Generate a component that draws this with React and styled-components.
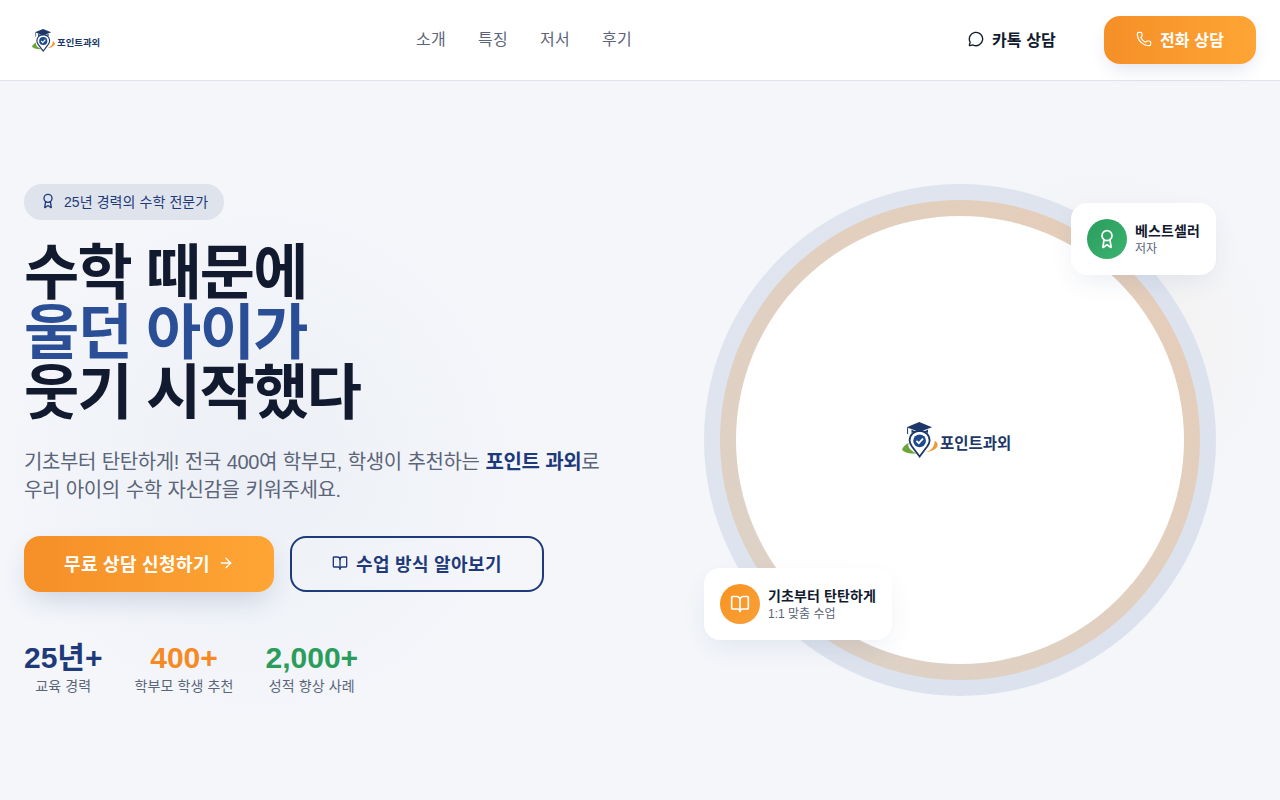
import React from 'react';
import styled, { createGlobalStyle } from 'styled-components';
import { Award, ArrowRight, BookOpen, MessageCircle, Phone } from 'lucide-react';

const NAVY = '#1e3a7a';
const INK = '#111a2e';
const MUTED = '#5b6579';
const ORANGE_GRADIENT = 'linear-gradient(90deg, #f58f27, #fea535)';

const Global = createGlobalStyle`
  * { box-sizing: border-box; }
  html, body { margin: 0; padding: 0; }
  body {
    background: #f4f6fa;
    font-family: "Liberation Sans", "Noto Sans CJK KR", sans-serif;
    color: ${INK};
  }
`;

const Page = styled.div`
  width: 100%;
  height: 800px;
  overflow: hidden;
  display: flex;
  flex-direction: column;
`;

const Header = styled.header`
  flex: 0 0 81px;
  display: flex;
  align-items: center;
  justify-content: space-between;
  padding: 0 24px;
  background: rgba(255, 255, 255, 0.95);
  border-bottom: 1px solid #e0e4ec;
`;

const LogoBox = styled.div`
  width: ${(p) => p.$width}px;
  display: flex;
  align-items: center;
  padding-left: ${(p) => p.$inset}px;
  gap: 2px;
`;

const LogoText = styled.span`
  font-size: ${(p) => p.$size}px;
  font-weight: 700;
  color: #1c3768;
  white-space: nowrap;
  line-height: 1;
  padding-top: ${(p) => p.$drop}px;
`;

const Nav = styled.nav`
  display: flex;
  gap: 32px;
`;

const NavLink = styled.a`
  font-size: 16px;
  line-height: 24px;
  letter-spacing: 0.28px;
  color: ${MUTED};
  margin-top: -1px;
`;

const Actions = styled.div`
  display: flex;
  align-items: center;
  gap: 16px;
`;

const BaseButton = styled.a`
  display: inline-flex;
  align-items: center;
  justify-content: center;
  gap: 8px;
  font-weight: 700;
  border-radius: 16px;
  white-space: nowrap;
`;

const GhostButton = styled(BaseButton)`
  height: 48px;
  padding: 0 32px 2px;
  font-size: 16px;
  letter-spacing: 0.14px;
  color: ${INK};
`;

const CallButton = styled(BaseButton)`
  height: 48px;
  padding: 0 32px 2px;
  font-size: 16px;
  letter-spacing: 0.14px;
  color: #fff;
  background: ${ORANGE_GRADIENT};
  box-shadow: 0 8px 20px -6px rgba(30, 58, 122, 0.18);
`;

const Hero = styled.main`
  flex: 1;
  display: grid;
  grid-template-columns: 1fr 1fr;
  gap: 48px;
  align-items: center;
  padding: 0 24px 1px;
  background:
    radial-gradient(circle at 260px 380px, rgba(30, 58, 122, 0.035), rgba(30, 58, 122, 0) 270px),
    radial-gradient(circle at 1100px 260px, rgba(247, 147, 30, 0.05), rgba(247, 147, 30, 0) 190px);
`;

const Copy = styled.section`
  display: flex;
  flex-direction: column;
  align-items: flex-start;
`;

const Pill = styled.div`
  height: 36px;
  display: inline-flex;
  align-items: center;
  gap: 8px;
  padding: 0 16px 2px;
  border-radius: 18px;
  background: rgba(30, 58, 122, 0.1);
  color: ${NAVY};
  font-size: 14px;
  letter-spacing: 0.08px;
`;

const Title = styled.h1`
  margin: 24px 0 0;
  font-size: 60px;
  line-height: 60px;
  font-weight: 700;
  letter-spacing: -1.65px;
  color: ${INK};
`;

const TitleLine = styled.span`
  display: block;
  color: ${(p) => p.$color || 'inherit'};
`;

const Lead = styled.p`
  margin: 24px 0 0;
  font-size: 20px;
  line-height: 28px;
  letter-spacing: -0.4px;
  word-spacing: 0.7px;
  color: ${MUTED};
`;

const LeadStrong = styled.strong`
  color: ${NAVY};
`;

const CtaRow = styled.div`
  display: flex;
  gap: 16px;
  margin-top: 32px;
`;

const PrimaryCta = styled(BaseButton)`
  height: 56px;
  padding: 0 40px 2px;
  font-size: 18px;
  letter-spacing: 0.44px;
  word-spacing: -0.44px;
  color: #fff;
  background: ${ORANGE_GRADIENT};
  box-shadow: 0 12px 28px -6px rgba(30, 58, 122, 0.2);
`;

const SecondaryCta = styled(BaseButton)`
  height: 56px;
  padding: 0 40px 2px;
  font-size: 18px;
  letter-spacing: 0.44px;
  word-spacing: -0.44px;
  color: ${NAVY};
  border: 2px solid ${NAVY};
`;

const Stats = styled.div`
  display: flex;
  gap: 32px;
  margin-top: 48px;
`;

const Stat = styled.div`
  display: flex;
  flex-direction: column;
  align-items: center;
`;

const StatValue = styled.div`
  font-size: 30px;
  line-height: 36px;
  font-weight: 700;
  color: ${(p) => p.$color};
`;

const StatLabel = styled.div`
  font-size: 14px;
  line-height: 20px;
  letter-spacing: 0.12px;
  color: ${MUTED};
`;

const Visual = styled.section`
  display: flex;
  justify-content: center;
`;

const Stage = styled.div`
  position: relative;
  width: 512px;
  height: 512px;
`;

const Ring = styled.div`
  width: 100%;
  height: 100%;
  padding: 16px;
  border-radius: 50%;
  background: ${(p) => p.$bg};
`;

const Disc = styled.div`
  width: 100%;
  height: 100%;
  border-radius: 50%;
  background: #fff;
  display: flex;
  align-items: center;
  justify-content: center;
`;

const FloatCard = styled.div`
  position: absolute;
  display: flex;
  align-items: center;
  gap: 8px;
  padding: 16px;
  border-radius: 16px;
  background: #fff;
  box-shadow: 0 10px 28px -6px rgba(30, 58, 122, 0.1);
  ${(p) => p.$pos}
`;

const CardIcon = styled.div`
  width: 40px;
  height: 40px;
  border-radius: 50%;
  display: flex;
  align-items: center;
  justify-content: center;
  color: #fff;
  background: ${(p) => p.$bg};
`;

const CardText = styled.div`
  display: flex;
  flex-direction: column;
`;

const CardTitle = styled.div`
  font-size: 14px;
  line-height: 20px;
  letter-spacing: 0.12px;
  font-weight: 700;
  color: ${INK};
`;

const CardSub = styled.div`
  font-size: 12px;
  line-height: 16px;
  color: ${MUTED};
`;

function LogoMark({ size }) {
  return (
    <svg width={size} height={size} viewBox="0 0 36 36" fill="none" aria-hidden="true">
      <path d="M0 27.5C1 24.5 3.5 22.5 6.5 21C5.5 24 7 27 11 29.5C12.5 30.5 14 31 15 31.5C9 32 2 31 0 27.5Z" fill="#6ea53a" />
      <path d="M24 30C29 28.5 32.5 25 32.5 19.5L33 19C35.5 20.5 36.5 22.5 35 25C33 28 28.5 29.8 24 30Z" fill="#ef9a37" />
      <path d="M17.6 34.5L10 24.5C8.2 22 7.6 20.5 7.6 18.5C7.6 13 12 8.8 17.6 8.8C23.2 8.8 27.6 13 27.6 18.5C27.6 20.5 27 22 25.2 24.5Z" fill="#fff" stroke="#1c3768" strokeWidth="1.8" />
      <circle cx="17.6" cy="18.8" r="6.4" fill="#1c4a8c" />
      <path d="M14.4 18.8L16.8 21.2L21 16.6" stroke="#fff" strokeWidth="1.8" fill="none" />
      <path d="M9.5 7.5C11.5 10 24 10 26 7.5V11C22 8.6 13.5 8.6 9.5 11Z" fill="#1c3768" />
      <path d="M17.3 0L30 5.2L17.3 10L4.7 5.2Z" fill="#1c3768" />
      <path d="M5.6 5.5V12" stroke="#1c3768" strokeWidth="1" />
    </svg>
  );
}

function Logo({ width, inset, mark, text, drop }) {
  return (
    <LogoBox $width={width} $inset={inset}>
      <LogoMark size={mark} />
      <LogoText $size={text} $drop={drop}>포인트과외</LogoText>
    </LogoBox>
  );
}

const NAV_ITEMS = ['소개', '특징', '저서', '후기'];
const STATS = [
  { value: '25년+', label: '교육 경력', color: NAVY },
  { value: '400+', label: '학부모 학생 추천', color: '#f58a25' },
  { value: '2,000+', label: '성적 향상 사례', color: '#2a9d5c' },
];

export default function App() {
  return (
    <Page lang="ko">
      <Global />
      <Header>
        <Logo width={88} inset={8} mark={23} text={9.4} drop={5} />
        <Nav>
          {NAV_ITEMS.map((item) => (
            <NavLink key={item}>{item}</NavLink>
          ))}
        </Nav>
        <Actions>
          <GhostButton>
            <MessageCircle size={16} />
            카톡 상담
          </GhostButton>
          <CallButton>
            <Phone size={16} strokeWidth={1.75} />
            전화 상담
          </CallButton>
        </Actions>
      </Header>
      <Hero>
        <Copy>
          <Pill>
            <Award size={16} />
            25년 경력의 수학 전문가
          </Pill>
          <Title>
            <TitleLine>수학 때문에</TitleLine>
            <TitleLine $color="#2b4f96">울던 아이가</TitleLine>
            <TitleLine>웃기 시작했다</TitleLine>
          </Title>
          <Lead>
            기초부터 탄탄하게! 전국 400여 학부모, 학생이 추천하는 <LeadStrong>포인트 과외</LeadStrong>로
            <br />
            우리 아이의 수학 자신감을 키워주세요.
          </Lead>
          <CtaRow>
            <PrimaryCta>
              무료 상담 신청하기
              <ArrowRight size={16} />
            </PrimaryCta>
            <SecondaryCta>
              <BookOpen size={16} />
              수업 방식 알아보기
            </SecondaryCta>
          </CtaRow>
          <Stats>
            {STATS.map((s) => (
              <Stat key={s.label}>
                <StatValue $color={s.color}>{s.value}</StatValue>
                <StatLabel>{s.label}</StatLabel>
              </Stat>
            ))}
          </Stats>
        </Copy>
        <Visual>
          <Stage>
            <Ring $bg="linear-gradient(135deg, #e0e5ef, #dbe2ed)">
              <Ring $bg="linear-gradient(45deg, #dcd2c8, #e6cdb8)">
                <Disc>
                  <Logo width={144} inset={14} mark={36} text={15.5} drop={8} />
                </Disc>
              </Ring>
            </Ring>
            <FloatCard $pos="top: 18.5px; right: 0;">
              <CardIcon $bg="linear-gradient(135deg, #2a9d5c, #3cb371)">
                <Award size={20} />
              </CardIcon>
              <CardText>
                <CardTitle>베스트셀러</CardTitle>
                <CardSub>저자</CardSub>
              </CardText>
            </FloatCard>
            <FloatCard $pos="bottom: 56px; left: 0;">
              <CardIcon $bg="linear-gradient(135deg, #f7931e, #f9a03a)">
                <BookOpen size={20} />
              </CardIcon>
              <CardText>
                <CardTitle>기초부터 탄탄하게</CardTitle>
                <CardSub>1:1 맞춤 수업</CardSub>
              </CardText>
            </FloatCard>
          </Stage>
        </Visual>
      </Hero>
    </Page>
  );
}
